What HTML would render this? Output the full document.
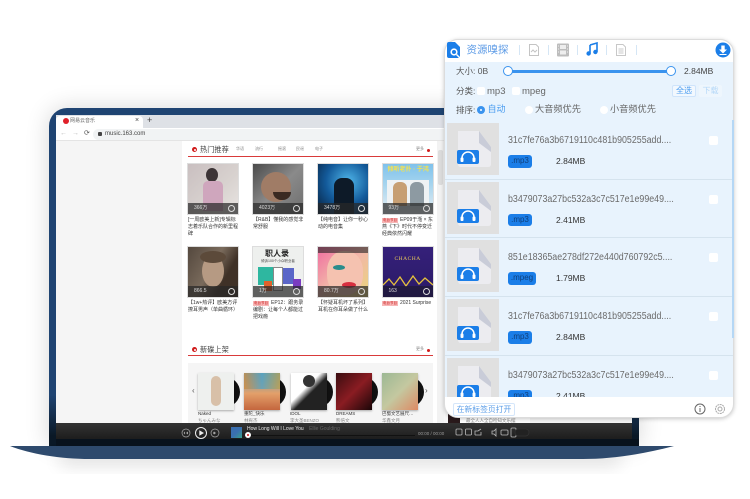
<!DOCTYPE html>
<html lang="zh"><head><meta charset="utf-8"><title>资源嗅探</title>
<style>
*{box-sizing:border-box;margin:0;padding:0}
html,body{width:750px;height:499px;background:#fff;overflow:hidden}
body{position:relative;font-family:"Liberation Sans","Noto Sans CJK SC",sans-serif;filter:blur(.3px)}
div,span,svg{position:absolute}
span{white-space:nowrap}
.t{line-height:1}
.cover{width:50px;height:50px;overflow:hidden;outline:1px solid #ddd}
.bar{left:0;right:0;bottom:0;height:11px;background:rgba(40,40,40,.72)}
.cnt{left:6px;top:2.5px;font-size:5px;color:#ddd;line-height:1}
.play{right:3px;top:2px;width:7px;height:7px;border:1px solid #ddd;border-radius:50%}
.cap{width:51px;font-size:5px;line-height:7px;color:#333;white-space:normal}
.tag{display:inline-block;position:static;background:#f7b6b6;color:#c22;font-size:3.5px;line-height:5px;padding:0 1px;margin-right:2px}
.tab{font-size:4px;color:#888;top:147px;line-height:1}
.alb{width:36px;height:37px;top:373px;box-shadow:0 1px 2px rgba(0,0,0,.3);overflow:hidden}
.vin{width:30px;height:30px;border-radius:50%;background:#111;top:377px}
.an{font-size:4.5px;color:#333;top:411.5px;line-height:1}
.ar{font-size:4.5px;color:#888;top:418.5px;line-height:1}
.row{left:445px;width:288px;height:58.7px;background:#e8f3fd;border-bottom:1px solid #d5e3ee}
.th{left:2px;top:2px;width:52px;height:52px;background:#e0e0e0}
.nm{left:63px;top:14px;font-size:10px;line-height:12px;color:#6b6b6b;transform:scaleX(.885);transform-origin:0 0}
.bd{left:63px;top:34px;width:24px;height:12.5px;background:#1b7ee8;border-radius:3px;font-size:8px;line-height:12.5px;text-align:center;color:#0f3f7a}
.sz{left:111px;top:35px;font-size:8.5px;line-height:11px;color:#333}
.ck{left:264px;top:15px;width:9px;height:9px;background:#fff;border-radius:2px}
.lb{font-size:8.5px;color:#555;line-height:11px}
.sep{top:45px;width:1px;height:10px;background:#d5e6f5}
.cb{width:8px;height:8px;background:#fff;border-radius:2px;top:87px}
.rd{width:8px;height:8px;background:#fff;border-radius:50%;top:106px}
</style></head><body>

<!-- laptop shadow + lid -->
<div style="left:49px;top:108px;width:590px;height:338px;background:#1f4472;border-radius:18px 18px 0 0;box-shadow:0 0 24px rgba(0,0,0,.16)"></div>
<div style="left:49px;top:395px;width:590px;height:51px;background:linear-gradient(#1f4472,#0a1826 80%)"></div>
<svg style="left:0;top:440px" width="750" height="59" viewBox="0 0 750 59">
<defs><filter id="b" x="-10%" y="-100%" width="120%" height="300%"><feGaussianBlur stdDeviation="9"/></filter></defs>
<path d="M60 14H620V24H60Z" fill="#000" opacity=".16" filter="url(#b)"/>
<path d="M10 6H674C640 15 610 19 583 19H90C60 19 30 14 10 6Z" fill="#2e4a6d"/>
</svg>

<!-- browser -->
<div style="left:56px;top:115px;width:576px;height:308px;background:#f5f5f5;overflow:hidden">
 <div style="left:0;top:0;width:576px;height:13px;background:#dee1e6"></div>
 <div style="left:0;top:1px;width:87px;height:12px;background:#fff;border-radius:4px 4px 0 0"></div>
 <div style="left:0;top:13px;width:576px;height:13px;background:#fff;border-bottom:1px solid #e4e4e4"></div>
 <div style="left:37px;top:14px;width:500px;height:11px;background:#f1f3f4;border-radius:6px"></div>
</div>
<div style="left:63px;top:118px;width:6px;height:6px;background:#e0202a;border-radius:50%"></div>
<span class="t" style="left:70px;top:119px;font-size:5px;color:#666">网易云音乐</span>
<span class="t" style="left:135px;top:117px;font-size:7px;color:#444">×</span>
<span class="t" style="left:147px;top:116px;font-size:9px;color:#444">+</span>
<span class="t" style="left:60px;top:130px;font-size:7px;color:#bbb">←</span>
<span class="t" style="left:72px;top:130px;font-size:7px;color:#bbb">→</span>
<span class="t" style="left:84px;top:130px;font-size:7px;color:#555">⟳</span>
<div style="left:98px;top:132px;width:4px;height:4px;background:#444;border-radius:1px"></div>
<span class="t" style="left:105px;top:130.5px;font-size:6px;color:#444">music.163.com</span>

<!-- content column -->
<div style="left:182px;top:141px;width:255px;height:282px;background:#fff"></div>
<div style="left:437px;top:141px;width:7px;height:282px;background:#f2f2f2"></div>
<div style="left:438px;top:150px;width:5px;height:35px;background:#ddd;border-radius:2px"></div>

<div style="left:192px;top:147px;width:5px;height:5px;background:#d01c1c;border-radius:50%;border:1px solid #d01c1c"></div>
<div style="left:193.5px;top:148.5px;width:2px;height:2px;background:#fff;border-radius:50%"></div>
<span class="t" style="left:200px;top:145.5px;font-size:7.2px;color:#444">热门推荐</span>
<span class="tab" style="left:236px">华语</span><span class="tab" style="left:255px">流行</span><span class="tab" style="left:278px">摇滚</span><span class="tab" style="left:296px">民谣</span><span class="tab" style="left:315px">电子</span>
<span class="tab" style="left:416px">更多</span>
<div style="left:427px;top:149px;width:3px;height:3px;background:#d01c1c;border-radius:50%"></div>
<div style="left:188px;top:155.5px;width:245px;height:1.2px;background:#d93a3a"></div>

<!-- row 1 covers -->
<div class="cover" style="left:188px;top:164px;background:linear-gradient(135deg,#c9bfc0,#d9d3d0 60%,#e8e4e2)">
 <div style="left:18px;top:4px;width:12px;height:14px;background:#3c3436;border-radius:50%"></div>
 <div style="left:15px;top:17px;width:20px;height:30px;background:#cfa6bd;border-radius:5px 5px 0 0"></div>
 <div class="bar"><span class="cnt">366万</span><div class="play"></div></div></div>
<div class="cover" style="left:253px;top:164px;background:linear-gradient(135deg,#4b4b4b,#8a8a8a 50%,#6e6e6e)">
 <div style="left:8px;top:8px;width:30px;height:30px;background:#a07c66;border-radius:50%"></div>
 <div style="left:20px;top:28px;width:18px;height:8px;background:#3a2a22;border-radius:0 0 8px 8px"></div>
 <div class="bar"><span class="cnt">4023万</span><div class="play"></div></div></div>
<div class="cover" style="left:318px;top:164px;background:radial-gradient(circle at 60% 35%,#4fb6ea,#135a9a 50%,#061a33)">
 <div style="left:16px;top:14px;width:20px;height:36px;background:#0d1a28;border-radius:8px 8px 0 0"></div>
 <div class="bar"><span class="cnt">3478万</span><div class="play"></div></div></div>
<div class="cover" style="left:382.5px;top:164px;background:linear-gradient(#7fc2ec,#a5d4ee 40%,#e8eef2)">
 <span class="t" style="left:5px;top:3px;font-size:6px;color:#f4e24e;font-weight:bold">倾听老扑 · 于鸿</span>
 <div style="left:4px;top:16px;width:42px;height:26px;background:#eef2f4"></div>
 <div style="left:10px;top:18px;width:14px;height:24px;background:#c79f73;border-radius:6px 6px 0 0"></div>
 <div style="left:27px;top:18px;width:14px;height:24px;background:#8d9aa2;border-radius:6px 6px 0 0"></div>
 <div class="bar"><span class="cnt">93万</span><div class="play"></div></div></div>

<div class="cap" style="left:188px;top:217px">[一周欧美上新]专辑标志着乐队合作的新里程碑</div>
<div class="cap" style="left:253px;top:217px">【R&amp;B】懂我的感觉非常舒服</div>
<div class="cap" style="left:318px;top:217px">【纯电音】让你一秒心动的电音集</div>
<div class="cap" style="left:382px;top:217px"><span class="tag">电台节目</span>EP09于湉 × 东燕《下》时代不停变迁经典依然闪耀</div>

<!-- row 2 covers -->
<div class="cover" style="left:188px;top:247px;background:linear-gradient(120deg,#54483e,#7a6b5c 45%,#3f3127 70%)">
 <div style="left:14px;top:8px;width:22px;height:32px;background:#b69a83;border-radius:50%"></div>
 <div style="left:12px;top:4px;width:26px;height:12px;background:#5c4a3a;border-radius:50%"></div>
 <div class="bar"><span class="cnt">866.5</span><div class="play"></div></div></div>
<div class="cover" style="left:253px;top:247px;background:#eef0ee">
 <span class="t" style="left:12px;top:3px;font-size:8px;font-weight:bold;color:#222">职人录</span>
 <span class="t" style="left:8px;top:13px;font-size:3.5px;color:#444">倾诉100个小众职业者</span>
 <div style="left:5px;top:20px;width:17px;height:18px;background:#2eb7a0"></div>
 <div style="left:20px;top:20px;width:10px;height:24px;background:#fff;border:1px solid #888"></div>
 <div style="left:30px;top:21px;width:11px;height:16px;background:#5a66c8"></div>
 <div style="left:40px;top:32px;width:8px;height:10px;background:#7a3cc0"></div>
 <div style="left:11px;top:34px;width:8px;height:10px;background:#e0622c"></div>
 <div class="bar"><span class="cnt">1万</span><div class="play"></div></div></div>
<div class="cover" style="left:318px;top:247px;background:linear-gradient(135deg,#f06ca0,#f2b7a8 50%,#e9d67a)">
 <div style="left:9px;top:4px;width:36px;height:44px;background:#f5c2b0;border-radius:45%"></div>
 <div style="left:15px;top:18px;width:12px;height:5px;background:#2a8d8c;border-radius:50%"></div>
 <div style="left:24px;top:35px;width:14px;height:6px;background:#d72f3f;border-radius:50%"></div>
 <div style="left:0;top:0;width:50px;height:6px;background:#222;opacity:.6"></div>
 <div class="bar"><span class="cnt">80.7万</span><div class="play"></div></div></div>
<div class="cover" style="left:382.5px;top:247px;background:linear-gradient(#35207a,#2a1a66)">
 <span class="t" style="left:12px;top:10px;font-size:5.5px;color:#e9c95a;letter-spacing:.5px;font-family:'Liberation Serif',serif">CHACHA</span>
 <svg style="left:0;top:26px" width="50" height="16" viewBox="0 0 50 16"><path d="M0 12L6 6 11 12 17 4 23 13 30 3 36 11 42 5 50 12" fill="none" stroke="#e6c23c" stroke-width="1.3"/></svg>
 <div class="bar" style="background:rgba(30,25,50,.7)"><span class="cnt">163</span><div class="play"></div></div></div>

<div class="cap" style="left:188px;top:300px">【1w+热评】欧美方评撩耳男声（单曲循环）</div>
<div class="cap" style="left:253px;top:300px"><span class="tag">电台节目</span>EP12：跟务录编剧：让每个人都能过把戏瘾</div>
<div class="cap" style="left:318px;top:300px">【怀疑耳机坏了系列】耳机在你耳朵做了什么</div>
<div class="cap" style="left:382px;top:300px;width:60px"><span class="tag">电台节目</span>2021 Surprise</div>

<!-- new albums -->
<div style="left:192px;top:347px;width:5px;height:5px;background:#d01c1c;border-radius:50%"></div>
<div style="left:193.5px;top:348.5px;width:2px;height:2px;background:#fff;border-radius:50%"></div>
<span class="t" style="left:200px;top:345.5px;font-size:7.2px;color:#444">新碟上架</span>
<span class="tab" style="left:416px;top:347px">更多</span>
<div style="left:427px;top:349px;width:3px;height:3px;background:#d01c1c;border-radius:50%"></div>
<div style="left:188px;top:354.5px;width:245px;height:1.2px;background:#d93a3a"></div>
<div style="left:188px;top:363px;width:245px;height:60px;background:#f5f5f5"></div>
<span class="t" style="left:192px;top:387px;font-size:8px;color:#555">‹</span>
<span class="t" style="left:425px;top:387px;font-size:8px;color:#555">›</span>

<div class="vin" style="left:210px"></div><div class="vin" style="left:256px"></div><div class="vin" style="left:303px"></div><div class="vin" style="left:348px"></div><div class="vin" style="left:394px"></div>
<div class="alb" style="left:198px;background:#eef0ee"><div style="left:13px;top:3px;width:10px;height:30px;background:#d8c0a8;border-radius:5px"></div></div>
<div class="alb" style="left:244px;background:linear-gradient(#4f9ec4,#e3a06a 55%,#c4663e)"><div style="left:0;top:0;width:36px;height:16px;background:linear-gradient(90deg,#d08c40,#5aa3c0,#b8a050);opacity:.8"></div></div>
<div class="alb" style="left:290.5px;background:linear-gradient(135deg,#fff 40%,#222 55%)"><div style="left:12px;top:2px;width:12px;height:12px;background:#333;border-radius:50%"></div></div>
<div class="alb" style="left:336px;background:linear-gradient(135deg,#3a0d10,#8a1c22 50%,#1a0608)"></div>
<div class="alb" style="left:382px;background:linear-gradient(135deg,#9cb894,#c4c8a0 50%,#dd8a64)"></div>

<span class="an" style="left:198px">Naked</span><span class="ar" style="left:198px">ちゃんみな</span>
<span class="an" style="left:244px">重陀_快乐</span><span class="ar" style="left:244px">林宥杰</span>
<span class="an" style="left:290px">IDOL</span><span class="ar" style="left:290px">李大圣BENZO</span>
<span class="an" style="left:336px">DREAMS</span><span class="ar" style="left:336px">熊倍文</span>
<span class="an" style="left:382px">巴蜀文艺展尺…</span><span class="ar" style="left:382px">华鑫文月</span>

<!-- under-panel sliver -->
<div style="left:448px;top:414px;width:82px;height:9px;background:#fff"></div>
<div style="left:448px;top:414px;width:12px;height:9px;background:#2a1a1c"></div>
<div style="left:530px;top:414px;width:102px;height:9px;background:#f5f5f5"></div>
<span class="t" style="left:466px;top:418.5px;font-size:4.5px;color:#888">最全人人全自检知文乐摆</span>

<!-- player -->
<div style="left:56px;top:423px;width:576px;height:16px;background:linear-gradient(#333,#1d1d1d)"></div>
<svg style="left:180px;top:425px" width="45" height="16" viewBox="0 0 45 16">
<circle cx="6" cy="8" r="4" fill="none" stroke="#aaa" stroke-width=".7"/><path d="M5 6.5V9.5L3.6 8ZM8 6.5V9.5L6 8Z" fill="#aaa"/>
<circle cx="21" cy="8" r="5.5" fill="none" stroke="#eee" stroke-width="1"/><path d="M19.3 5.2V10.8L24 8Z" fill="#eee"/>
<circle cx="35" cy="8" r="4" fill="none" stroke="#aaa" stroke-width=".7"/><path d="M34 6.5V9.5L36 8ZM33 6.5L33 9.5 34 8Z" fill="#aaa"/>
</svg>
<div style="left:231px;top:427px;width:11px;height:11px;background:linear-gradient(135deg,#3a6fb0 50%,#38a08c)"></div>
<span class="t" style="left:247px;top:426.5px;font-size:5px;color:#eee">How Long Will I Love You</span>
<span class="t" style="left:309px;top:426.5px;font-size:5px;color:#666">Ellie Goulding</span>
<div style="left:248px;top:434.5px;width:167px;height:1.5px;background:#111"></div>
<div style="left:245px;top:432px;width:6px;height:6px;background:#fff;border-radius:50%"></div>
<div style="left:247px;top:434px;width:2px;height:2px;background:#d01c1c;border-radius:50%"></div>
<span class="t" style="left:418px;top:432px;font-size:4.5px;color:#999">00:00 / 00:00</span>
<svg style="left:455px;top:427px" width="75" height="14" viewBox="0 0 75 14" fill="none" stroke="#bbb" stroke-width=".8">
<rect x="1" y="2" width="6" height="6" rx="1"/><rect x="10.5" y="2" width="6" height="6" rx="1"/><path d="M20 8V4H23L26 2M20 8H26V5"/>
<path d="M37 4V7H39L41 9V2L39 4Z"/><rect x="46" y="3" width="7" height="5" rx="1"/><rect x="56" y="1" width="5" height="9" rx="1"/>
<rect x="60" y="2" width="14" height="7" rx="3.5" fill="#222" stroke="#333"/>
</svg>
<div style="left:56px;top:439px;width:583px;height:7px;background:#08121d"></div>

<!-- plugin panel -->
<div style="left:444px;top:39px;width:290px;height:379px;background:#fff;border-radius:14px;border:1px solid #dcdcdc;box-shadow:0 1px 4px rgba(0,0,0,.22);overflow:hidden"></div>
<div style="left:445px;top:62px;width:288px;height:59px;background:#e8f3fd"></div>

<svg style="left:447px;top:42px" width="14" height="18" viewBox="0 0 14 18"><path d="M0 2Q0 0 2 0H8L13 5V14Q13 16 11 16H2Q0 16 0 14Z" fill="#1b7ee8"/><circle cx="7" cy="10" r="3.6" fill="#fff"/><circle cx="7" cy="10" r="2" fill="#1b7ee8"/><path d="M9.5 12.5L13 16" stroke="#fff" stroke-width="1.4"/></svg>
<span style="left:466.5px;top:43px;font-size:10.5px;line-height:15px;color:#5b9ae6">资源嗅探</span>
<div class="sep" style="left:519px"></div><div class="sep" style="left:548px"></div><div class="sep" style="left:577px"></div><div class="sep" style="left:606px"></div><div class="sep" style="left:636px"></div>
<svg style="left:528px;top:43px" width="12" height="14" viewBox="0 0 12 14" fill="none" stroke="#c4c4c4"><path d="M1.5 1.5H8L10.5 4V12.5H1.5Z"/><path d="M3 9L5 7 7 9 9 7"/></svg>
<svg style="left:557px;top:43px" width="12" height="14" viewBox="0 0 12 14"><rect width="12" height="13" y=".5" rx="1" fill="#bdbdbd"/><rect x="3" y="2" width="6" height="4" fill="#eee"/><rect x="3" y="7.5" width="6" height="4" fill="#eee"/><path d="M1 3H2M1 6H2M1 9H2M10 3H11M10 6H11M10 9H11" stroke="#eee"/></svg>
<svg style="left:586px;top:42px" width="12" height="14" viewBox="0 0 12 14"><path d="M4 3L11 1V10" fill="none" stroke="#1b7ee8" stroke-width="1.6"/><path d="M4 3V11.5" stroke="#1b7ee8" stroke-width="1.6"/><circle cx="2.6" cy="11.5" r="2.2" fill="#1b7ee8"/><circle cx="9.4" cy="10" r="2.2" fill="#1b7ee8"/></svg>
<svg style="left:615px;top:43px" width="12" height="14" viewBox="0 0 12 14" fill="none" stroke="#c8c8c8"><path d="M1.5 1.5H8L10.5 4V12.5H1.5Z"/><path d="M3.5 6H8.5M3.5 8H8.5M3.5 10H8.5"/></svg>
<svg style="left:715px;top:42px" width="16" height="16" viewBox="0 0 16 16"><circle cx="8" cy="8" r="7.5" fill="#1b7ee8"/><path d="M6.3 3.5H9.7V7.5H12L8 11.5 4 7.5H6.3ZM4.5 12H11.5V13H4.5Z" fill="#fff"/></svg>

<span class="lb" style="left:456px;top:66px">大小: 0B</span>
<div style="left:507px;top:69.5px;width:164px;height:3px;background:#3a93ee"></div>
<div style="left:503px;top:66px;width:10px;height:10px;background:#fff;border:1.5px solid #3a93ee;border-radius:50%"></div>
<div style="left:666px;top:66px;width:10px;height:10px;background:#fff;border:1.5px solid #3a93ee;border-radius:50%"></div>
<span class="lb" style="left:684px;top:66px;color:#444">2.84MB</span>

<span class="lb" style="left:456px;top:86px">分类:</span>
<div class="cb" style="left:477px"></div><span class="lb" style="left:487px;top:85.5px;font-size:9.5px;color:#666">mp3</span>
<div class="cb" style="left:512px"></div><span class="lb" style="left:522px;top:85.5px;font-size:9.5px;color:#666">mpeg</span>
<div style="left:672px;top:85px;width:24px;height:12px;background:#f2f8fe;border:1px solid #cfe4fb;border-radius:2px;font-size:8px;line-height:10px;text-align:center;color:#4a9cf0">全选</div>
<div style="left:699px;top:85px;width:23px;height:12px;background:#eef6fd;border-radius:2px;font-size:8px;line-height:12px;text-align:center;color:#b5d8f8">下载</div>

<span class="lb" style="left:456px;top:105px">排序:</span>
<div style="left:477px;top:106px;width:8px;height:8px;background:#3a93ee;border-radius:50%"></div>
<div style="left:480px;top:109px;width:2px;height:2px;background:#fff;border-radius:50%"></div>
<span class="lb" style="left:487.5px;top:104px;font-size:9px;color:#4a9cf0">自动</span>
<div class="rd" style="left:525px"></div><span class="lb" style="left:535px;top:104px;font-size:9.2px;color:#666">大音频优先</span>
<div class="rd" style="left:600px"></div><span class="lb" style="left:610px;top:104px;font-size:9.2px;color:#666">小音频优先</span>

<!-- rows -->
<div class="row" style="top:121px"><div class="th"><svg style="left:0;top:0" width="52" height="52" viewBox="0 0 52 52"><path d="M11 8H32L44 24V41Q44 44 41 44H14Q11 44 11 41Z" fill="#ececf0"/><path d="M32 8L44 24 44 29 32 20Z" fill="#c9ccd8"/><rect x="10" y="27" width="22" height="14" rx="2" fill="#1b7ee8"/><path d="M15 38V35A6 6 0 0 1 27 35V38" fill="none" stroke="#fff" stroke-width="1.5"/><rect x="13.5" y="34.5" width="3" height="4.5" rx="1" fill="#fff"/><rect x="25.5" y="34.5" width="3" height="4.5" rx="1" fill="#fff"/></svg></div><span class="nm">31c7fe76a3b6719110c481b905255add....</span><div class="bd">.mp3</div><span class="sz">2.84MB</span><div class="ck"></div></div>
<div class="row" style="top:179.7px"><div class="th"><svg style="left:0;top:0" width="52" height="52" viewBox="0 0 52 52"><path d="M11 8H32L44 24V41Q44 44 41 44H14Q11 44 11 41Z" fill="#ececf0"/><path d="M32 8L44 24 44 29 32 20Z" fill="#c9ccd8"/><rect x="10" y="27" width="22" height="14" rx="2" fill="#1b7ee8"/><path d="M15 38V35A6 6 0 0 1 27 35V38" fill="none" stroke="#fff" stroke-width="1.5"/><rect x="13.5" y="34.5" width="3" height="4.5" rx="1" fill="#fff"/><rect x="25.5" y="34.5" width="3" height="4.5" rx="1" fill="#fff"/></svg></div><span class="nm">b3479073a27bc532a3c7c517e1e99e49....</span><div class="bd">.mp3</div><span class="sz">2.41MB</span><div class="ck"></div></div>
<div class="row" style="top:238.4px"><div class="th"><svg style="left:0;top:0" width="52" height="52" viewBox="0 0 52 52"><path d="M11 8H32L44 24V41Q44 44 41 44H14Q11 44 11 41Z" fill="#ececf0"/><path d="M32 8L44 24 44 29 32 20Z" fill="#c9ccd8"/><rect x="10" y="27" width="22" height="14" rx="2" fill="#1b7ee8"/><path d="M15 38V35A6 6 0 0 1 27 35V38" fill="none" stroke="#fff" stroke-width="1.5"/><rect x="13.5" y="34.5" width="3" height="4.5" rx="1" fill="#fff"/><rect x="25.5" y="34.5" width="3" height="4.5" rx="1" fill="#fff"/></svg></div><span class="nm">851e18365ae278df272e440d760792c5....</span><div class="bd" style="width:28px">.mpeg</div><span class="sz">1.79MB</span><div class="ck"></div></div>
<div class="row" style="top:297px"><div class="th"><svg style="left:0;top:0" width="52" height="52" viewBox="0 0 52 52"><path d="M11 8H32L44 24V41Q44 44 41 44H14Q11 44 11 41Z" fill="#ececf0"/><path d="M32 8L44 24 44 29 32 20Z" fill="#c9ccd8"/><rect x="10" y="27" width="22" height="14" rx="2" fill="#1b7ee8"/><path d="M15 38V35A6 6 0 0 1 27 35V38" fill="none" stroke="#fff" stroke-width="1.5"/><rect x="13.5" y="34.5" width="3" height="4.5" rx="1" fill="#fff"/><rect x="25.5" y="34.5" width="3" height="4.5" rx="1" fill="#fff"/></svg></div><span class="nm">31c7fe76a3b6719110c481b905255add....</span><div class="bd">.mp3</div><span class="sz">2.84MB</span><div class="ck"></div></div>
<div class="row" style="top:355.7px;height:41.3px;overflow:hidden;border:0"><div class="th"><svg style="left:0;top:0" width="52" height="52" viewBox="0 0 52 52"><path d="M11 8H32L44 24V41Q44 44 41 44H14Q11 44 11 41Z" fill="#ececf0"/><path d="M32 8L44 24 44 29 32 20Z" fill="#c9ccd8"/><rect x="10" y="27" width="22" height="14" rx="2" fill="#1b7ee8"/><path d="M15 38V35A6 6 0 0 1 27 35V38" fill="none" stroke="#fff" stroke-width="1.5"/><rect x="13.5" y="34.5" width="3" height="4.5" rx="1" fill="#fff"/><rect x="25.5" y="34.5" width="3" height="4.5" rx="1" fill="#fff"/></svg></div><span class="nm">b3479073a27bc532a3c7c517e1e99e49....</span><div class="bd">.mp3</div><span class="sz">2.41MB</span><div class="ck"></div></div>
<div style="left:732px;top:120px;width:1.5px;height:218px;background:#b5d7f5"></div>

<!-- footer -->
<div style="left:453px;top:403px;width:62px;height:13px;background:#fff;border:1px solid #d5e6fa;border-radius:2px;font-size:7.8px;line-height:11px;text-align:center;color:#5a9de8;white-space:nowrap">在新标签页打开</div>
<svg style="left:693px;top:402px" width="34" height="14" viewBox="0 0 34 14" fill="none">
<circle cx="7" cy="7" r="5" stroke="#666"/><path d="M7 6V10M7 4V5" stroke="#666"/>
<circle cx="27" cy="7" r="4.5" stroke="#aaa" stroke-dasharray="2 .6"/><circle cx="27" cy="7" r="2" stroke="#aaa"/>
</svg>
</body></html>
